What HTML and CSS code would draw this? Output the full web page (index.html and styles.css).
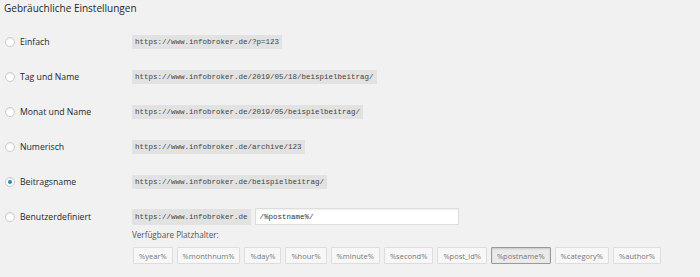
FILE: index.html
```html
<!DOCTYPE html>
<html lang="de">
<head>
    <meta charset="UTF-8">
    <title>Permalinks</title>
    <link rel="stylesheet" href="styles.css">
</head>
<body>
    <h2 class="title">Gebräuchliche Einstellungen</h2>

    <div class="row">
        <label class="opt"><span class="radio"></span>Einfach</label>
        <div class="val"><code>https://www.infobroker.de/?p=123</code></div>
    </div>
    <div class="row">
        <label class="opt"><span class="radio"></span>Tag und Name</label>
        <div class="val"><code>https://www.infobroker.de/2019/05/18/beispielbeitrag/</code></div>
    </div>
    <div class="row">
        <label class="opt"><span class="radio"></span>Monat und Name</label>
        <div class="val"><code>https://www.infobroker.de/2019/05/beispielbeitrag/</code></div>
    </div>
    <div class="row">
        <label class="opt"><span class="radio"></span>Numerisch</label>
        <div class="val"><code>https://www.infobroker.de/archive/123</code></div>
    </div>
    <div class="row">
        <label class="opt"><span class="radio checked"></span>Beitragsname</label>
        <div class="val"><code>https://www.infobroker.de/beispielbeitrag/</code></div>
    </div>
    <div class="row custom">
        <label class="opt"><span class="radio"></span>Benutzerdefiniert</label>
        <div class="val">
            <div class="struct">
                <code>https://www.infobroker.de</code>
                <input type="text" class="struct-input" value="/%postname%/">
            </div>
            <div class="hint">Verfügbare Platzhalter:</div>
            <div class="tags">
                <button class="tag">%year%</button>
                <button class="tag">%monthnum%</button>
                <button class="tag">%day%</button>
                <button class="tag">%hour%</button>
                <button class="tag">%minute%</button>
                <button class="tag">%second%</button>
                <button class="tag">%post_id%</button>
                <button class="tag active">%postname%</button>
                <button class="tag">%category%</button>
                <button class="tag">%author%</button>
            </div>
        </div>
    </div>
</body>
</html>
```

FILE: styles.css
```css
body {
    margin: 0;
    padding: 0 4px;
    background: #f1f1f1;
    color: #23282d;
    font-family: "Open Sans", "Noto Sans", sans-serif;
    font-size: 8.7px;
}
.title {
    margin: 0;
    height: 24px;
    line-height: 17px;
    font-size: 10px;
    font-weight: 400;
}
.row {
    display: flex;
    align-items: center;
    height: 35px;
}
.opt {
    display: flex;
    align-items: center;
    width: 128px;
    flex: none;
}
.radio {
    width: 8px;
    height: 8px;
    border: 1px solid #c9cccf;
    border-radius: 50%;
    background: #fff;
    margin: 0 5px 0 1px;
    position: relative;
    box-shadow: inset 0 1px 1px rgba(0, 0, 0, 0.08);
}
.radio.checked::after {
    content: "";
    position: absolute;
    left: 2px;
    top: 2px;
    width: 4px;
    height: 4px;
    border-radius: 50%;
    background: #1e8cbe;
}
code {
    display: inline-block;
    font-family: "Liberation Mono", monospace;
    font-size: 7.5px;
    line-height: 14px;
    padding: 0 3px;
    background: #e2e2e2;
    color: #444;
}
.custom {
    height: auto;
    align-items: flex-start;
    padding-top: 9px;
}
.custom .opt {
    height: 17px;
}
.struct {
    display: flex;
    align-items: center;
    gap: 4px;
}
.struct code {
    line-height: 16px;
}
.struct-input {
    width: 204px;
    height: 17px;
    box-sizing: border-box;
    border: 1px solid #ddd;
    background: #fff;
    font-family: "Liberation Mono", monospace;
    font-size: 7.5px;
    padding: 0 4px;
    color: #333;
    box-shadow: inset 0 1px 2px rgba(0, 0, 0, 0.07);
}
.hint {
    margin-top: 4px;
    line-height: 12px;
    color: #555;
    font-size: 8.1px;
}
.tags {
    display: flex;
    gap: 4px;
    margin-top: 6px;
    padding-left: 1px;
}
.tag {
    height: 17px;
    padding: 0 5px;
    border: 1px solid #ddd;
    background: #f7f7f7;
    color: #777;
    font-family: "Open Sans", "Noto Sans", sans-serif;
    font-size: 7.5px;
    border-radius: 1px;
}
.tag.active {
    border-color: #999;
    background: #eaeaea;
    box-shadow: inset 0 1px 2px rgba(0, 0, 0, 0.15);
}
```
